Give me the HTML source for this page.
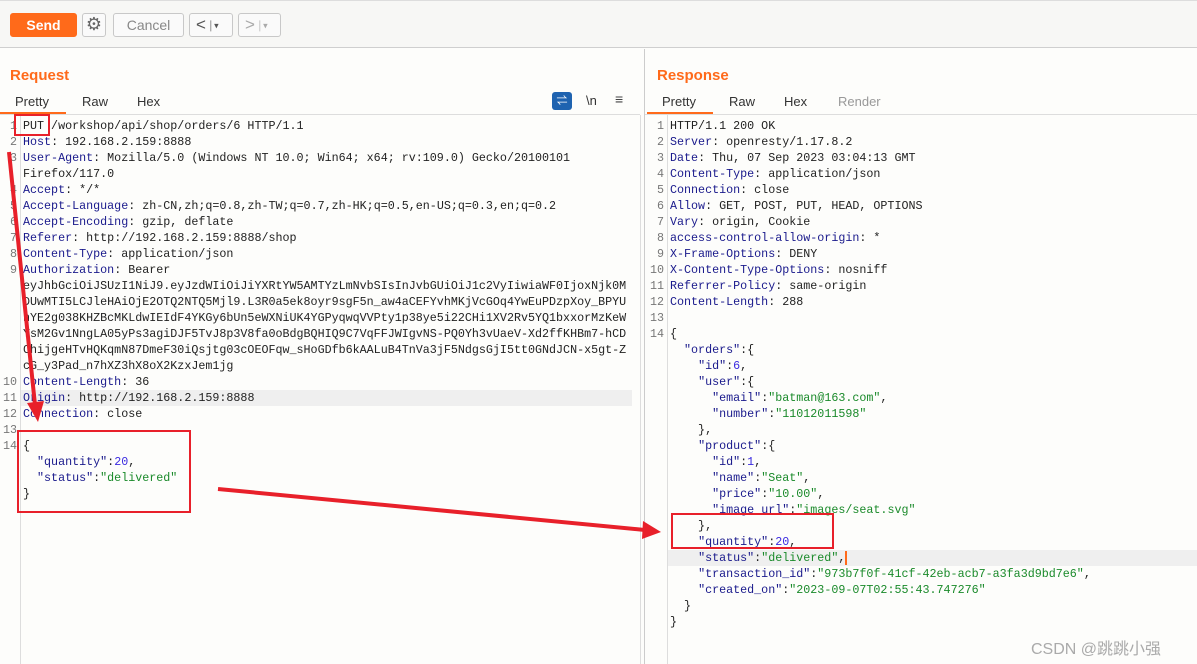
<!DOCTYPE html>
<html><head><meta charset="utf-8"><style>
*{margin:0;padding:0;box-sizing:border-box}
body{width:1197px;height:664px;overflow:hidden;background:#fdfdfb;font-family:"Liberation Sans","Noto Sans CJK SC",sans-serif;position:relative}
.tb{position:absolute;left:0;top:0;width:1197px;height:48px;background:#f7f7f5;border-top:1px solid #ddd;border-bottom:1px solid #cfcfcf}
.btn{position:absolute;top:12px;height:24px;border:1px solid #c8c8c8;border-radius:3px;background:#fafafa;color:#888;font-size:14px;text-align:center;line-height:22px}
.send{background:#ff6a1a;border-color:#ff6a1a;color:#fff;font-weight:bold}
.title{position:absolute;top:67px;font-size:15px;font-weight:bold;color:#ff6a1a}
.tab{position:absolute;top:94px;font-size:13px;color:#333}
.ul{position:absolute;top:112px;height:2px;background:#ff6a1a}
.hl{position:absolute;top:114px;height:1px;background:#ddd}
.code{position:absolute;top:118px;font-family:"Liberation Mono",monospace;font-size:11.7px;line-height:16px;color:#222;white-space:pre}
.gut{position:absolute;top:118px;font-family:"Liberation Mono",monospace;font-size:11.7px;line-height:16px;color:#777;text-align:right;white-space:pre}
.k{color:#1a1a8c}.s{color:#1a8a2a}.n{color:#3a2ae0}
</style></head><body>
<div class="tb">
<div class="btn send" style="left:10px;width:67px">Send</div>
<div class="btn" style="left:82px;width:24px;font-size:18px;line-height:21px;color:#666">⚙</div>
<div class="btn" style="left:113px;width:71px">Cancel</div>
<div class="btn" style="left:189px;width:44px;color:#555;text-align:left;padding-left:6px;font-size:17px">&lt;<span style="font-size:9px;vertical-align:middle"> │▾</span></div>
<div class="btn" style="left:238px;width:43px;color:#aaa;text-align:left;padding-left:6px;font-size:17px">&gt;<span style="font-size:9px;vertical-align:middle"> │▾</span></div>
</div>
<div style="position:absolute;left:644px;top:49px;width:1px;height:615px;background:#ccc"></div>
<div class="title" style="left:10px">Request</div>
<div class="title" style="left:657px">Response</div>
<div class="tab" style="left:15px">Pretty</div><div class="tab" style="left:82px">Raw</div><div class="tab" style="left:137px">Hex</div>
<div class="tab" style="left:662px">Pretty</div><div class="tab" style="left:729px">Raw</div><div class="tab" style="left:784px">Hex</div><div class="tab" style="left:838px;color:#999">Render</div>
<div style="position:absolute;left:552px;top:92px;width:20px;height:18px;background:#1f63b0;border-radius:3px;color:#fff;font-size:11px;text-align:center;line-height:18px">⇌</div>
<div style="position:absolute;left:586px;top:93px;font-size:13px;color:#333">\n</div>
<div style="position:absolute;left:615px;top:91px;font-size:14px;color:#444">≡</div>
<div class="hl" style="left:0;width:640px"></div><div class="hl" style="left:645px;width:552px"></div>
<div class="ul" style="left:0;width:66px"></div><div class="ul" style="left:647px;width:66px"></div>
<div style="position:absolute;left:20px;top:115px;width:1px;height:549px;background:#ddd"></div>
<div style="position:absolute;left:667px;top:115px;width:1px;height:549px;background:#ddd"></div>
<div style="position:absolute;left:21px;top:390px;width:611px;height:16px;background:#efefef"></div>
<div style="position:absolute;left:668px;top:550px;width:529px;height:16px;background:#efefef"></div>
<div style="position:absolute;left:640px;top:115px;width:1px;height:549px;background:#ddd"></div>
<div class="gut" style="left:0;width:17px">1
2
3

4
5
6
7
8
9






10
11
12
13
14</div>
<div class="code" style="left:23px">PUT /workshop/api/shop/orders/6 HTTP/1.1
<span class="k">Host</span>: 192.168.2.159:8888
<span class="k">User-Agent</span>: Mozilla/5.0 (Windows NT 10.0; Win64; x64; rv:109.0) Gecko/20100101
Firefox/117.0
<span class="k">Accept</span>: */*
<span class="k">Accept-Language</span>: zh-CN,zh;q=0.8,zh-TW;q=0.7,zh-HK;q=0.5,en-US;q=0.3,en;q=0.2
<span class="k">Accept-Encoding</span>: gzip, deflate
<span class="k">Referer</span>: http://192.168.2.159:8888/shop
<span class="k">Content-Type</span>: application/json
<span class="k">Authorization</span>: Bearer
eyJhbGciOiJSUzI1NiJ9.eyJzdWIiOiJiYXRtYW5AMTYzLmNvbSIsInJvbGUiOiJ1c2VyIiwiaWF0IjoxNjk0M
DUwMTI5LCJleHAiOjE2OTQ2NTQ5Mjl9.L3R0a5ek8oyr9sgF5n_aw4aCEFYvhMKjVcGOq4YwEuPDzpXoy_BPYU
nYE2g038KHZBcMKLdwIEIdF4YKGy6bUn5eWXNiUK4YGPyqwqVVPty1p38ye5i22CHi1XV2Rv5YQ1bxxorMzKeW
YsM2Gv1NngLA05yPs3agiDJF5TvJ8p3V8fa0oBdgBQHIQ9C7VqFFJWIgvNS-PQ0Yh3vUaeV-Xd2ffKHBm7-hCD
ChijgeHTvHQKqmN87DmeF30iQsjtg03cOEOFqw_sHoGDfb6kAALuB4TnVa3jF5NdgsGjI5tt0GNdJCN-x5gt-Z
cG_y3Pad_n7hXZ3hX8oX2KzxJem1jg
<span class="k">Content-Length</span>: 36
<span class="k">Origin</span>: http://192.168.2.159:8888
<span class="k">Connection</span>: close

{
  <span class="k">"quantity"</span>:<span class="n">20</span>,
  <span class="k">"status"</span>:<span class="s">"delivered"</span>
}</div>
<div class="gut" style="left:645px;width:19px">1
2
3
4
5
6
7
8
9
10
11
12
13
14</div>
<div class="code" style="left:670px">HTTP/1.1 200 OK
<span class="k">Server</span>: openresty/1.17.8.2
<span class="k">Date</span>: Thu, 07 Sep 2023 03:04:13 GMT
<span class="k">Content-Type</span>: application/json
<span class="k">Connection</span>: close
<span class="k">Allow</span>: GET, POST, PUT, HEAD, OPTIONS
<span class="k">Vary</span>: origin, Cookie
<span class="k">access-control-allow-origin</span>: *
<span class="k">X-Frame-Options</span>: DENY
<span class="k">X-Content-Type-Options</span>: nosniff
<span class="k">Referrer-Policy</span>: same-origin
<span class="k">Content-Length</span>: 288

{
  <span class="k">"orders"</span>:{
    <span class="k">"id"</span>:<span class="n">6</span>,
    <span class="k">"user"</span>:{
      <span class="k">"email"</span>:<span class="s">"batman@163.com"</span>,
      <span class="k">"number"</span>:<span class="s">"11012011598"</span>
    },
    <span class="k">"product"</span>:{
      <span class="k">"id"</span>:<span class="n">1</span>,
      <span class="k">"name"</span>:<span class="s">"Seat"</span>,
      <span class="k">"price"</span>:<span class="s">"10.00"</span>,
      <span class="k">"image_url"</span>:<span class="s">"images/seat.svg"</span>
    },
    <span class="k">"quantity"</span>:<span class="n">20</span>,
    <span class="k">"status"</span>:<span class="s">"delivered"</span>,<span style="border-left:2px solid #ff6a1a"></span>
    <span class="k">"transaction_id"</span>:<span class="s">"973b7f0f-41cf-42eb-acb7-a3fa3d9bd7e6"</span>,
    <span class="k">"created_on"</span>:<span class="s">"2023-09-07T02:55:43.747276"</span>
  }
}</div>
<div style="position:absolute;left:1031px;top:635px;font-size:16px;color:#aaa">CSDN @跳跳小强</div>
<svg style="position:absolute;left:0;top:0" width="1197" height="664">
<g fill="none" stroke="#e8202a" stroke-width="2">
<rect x="15" y="115" width="34" height="20"/>
<rect x="18" y="431" width="172" height="81"/>
<rect x="672" y="514" width="161" height="34"/>
</g>
<g stroke="#e8202a" stroke-width="4" fill="#e8202a">
<line x1="9" y1="152" x2="35" y2="405"/>
<polygon points="27,403 44,401 38,422" stroke="none"/>
<line x1="218" y1="489" x2="645" y2="530"/>
<polygon points="643,521 661,532 642,539" stroke="none"/>
</g>
</svg>
</body></html>
